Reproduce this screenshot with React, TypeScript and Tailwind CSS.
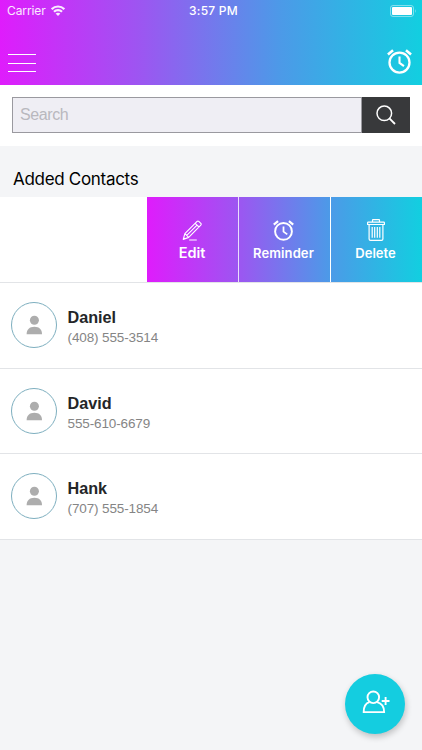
import React from "react";

type IconProps = { className?: string };

const AlarmIcon = ({ className }: IconProps) => (
  <svg viewBox="0 0 24 24" fill="none" stroke="currentColor" strokeWidth="2.2" className={className}>
    <circle cx="12" cy="13" r="9.6" />
    <path d="M12 7.3V13.3L16.3 16.4" strokeWidth="2" />
    <path d="M.9 5.2L5.8 1.2M23.1 5.2L18.2 1.2" strokeWidth="2.5" />
  </svg>
);

const PencilIcon = () => (
  <svg viewBox="0 0 22 22" fill="none" stroke="currentColor" strokeWidth="1.2" strokeLinejoin="round" className="h-[21px] w-[21px]">
    <path d="M1.3 20.3L3 14.2L15.8 1.5Q16.7.7 17.6 1.5L19.7 3.6Q20.5 4.5 19.7 5.4L7 18.2ZM13.8 3.5L17.8 7.3M3 14.2L7 18.2M5 16.2L15.8 5.4M1.8 18.5L3 19.7M7.5 20.9H15.5" />
  </svg>
);

const TrashIcon = () => (
  <svg viewBox="0 0 18 22" fill="none" stroke="currentColor" strokeWidth="1.2" strokeLinejoin="round" className="h-[22px] w-[18px]">
    <path d="M5.5 3V1.1Q5.5.6 6 .6H12Q12.5.6 12.5 1.1V3M1.3 3.1H16.7Q17.4 3.1 17.4 3.8V5.5H.6V3.8Q.6 3.1 1.3 3.1ZM2.1 5.5V20Q2.1 21.4 3.5 21.4H14.5Q15.9 21.4 15.9 20V5.5M5.2 8V18.8M7.7 8V18.8M10.3 8V18.8M12.8 8V18.8" />
  </svg>
);

const Avatar = () => (
  <div className="flex h-[46px] w-[46px] shrink-0 items-center justify-center rounded-full border border-[#7eafbf]">
    <svg viewBox="0 0 16 20" className="h-5 w-4" fill="#adadad">
      <circle cx="8.4" cy="5.2" r="4.5" />
      <path d="M.6 19.2C.6 14.5 3.6 11.8 8.4 11.8S16 14.5 16 19.2Z" />
    </svg>
  </div>
);

const contacts = [
  { name: "Daniel", phone: "(408) 555-3514" },
  { name: "David", phone: "555-610-6679" },
  { name: "Hank", phone: "(707) 555-1854" },
];

export default function App() {
  return (
    <main className="relative flex h-[750px] w-[422px] flex-col overflow-hidden bg-[#f4f5f7] font-['Inter',sans-serif]">
      <header className="flex h-[84.5px] shrink-0 flex-col bg-[linear-gradient(90deg,#df1cfc_0%,#9b57f1_34%,#4d99e8_66%,#12cfe0_100%)] text-white">
        <div className="grid h-[22px] grid-cols-3 items-center pr-[5px] pl-[7px]">
          <div className="flex items-center gap-[5px] text-white/90">
            <span className="text-[12px] leading-none tracking-[-0.1px]">Carrier</span>
            <svg viewBox="0 0 14 11" className="mb-px h-[11px] w-[14px]" fill="none" stroke="currentColor" strokeWidth="2.2">
              <path d="M.7 4.1C4.2.6 9.8.6 13.3 4.1M3 6.7C5.2 4.5 8.8 4.5 11 6.7" />
              <path d="M7 10.9L4.6 8.6Q7 6.7 9.4 8.6Z" fill="currentColor" stroke="none" />
            </svg>
          </div>
          <span className="pl-[3px] text-center text-[12px] leading-none font-medium tracking-[0.25px] whitespace-nowrap">3:57 PM</span>
          <svg viewBox="0 0 27 12" className="mb-px h-3 w-[27px] justify-self-end" fill="none">
            <rect x=".5" y=".5" width="23" height="11" rx="2.5" stroke="white" strokeOpacity=".45" />
            <rect x="2" y="2" width="20" height="8" rx="1" fill="white" />
            <path d="M25 4Q26.5 6 25 8Z" fill="white" fillOpacity=".5" />
          </svg>
        </div>
        <div className="flex items-start justify-between pr-[10px] pl-2">
          <div className="flex w-7 flex-col gap-[7.5px] pt-8">
            <div className="h-px bg-white" />
            <div className="h-px bg-white" />
            <div className="h-px bg-white" />
          </div>
          <AlarmIcon className="mt-[27px] h-[25px] w-[25px]" />
        </div>
      </header>

      <section className="flex h-[61.5px] shrink-0 items-start bg-white pt-[12.5px] pr-[12px] pl-[12px]">
        <div className="flex h-9 flex-1 items-center border border-[#9a999f] bg-[#efeef4] pl-[7px] font-['Liberation_Sans',sans-serif] text-[16px] tracking-[-0.4px] text-[#b9b8be]">
          Search
        </div>
        <div className="flex h-9 w-12 items-center justify-center bg-[#38393b] text-white">
          <svg viewBox="0 0 20 20" className="h-5 w-5" fill="none" stroke="currentColor" strokeWidth="1.5">
            <circle cx="8.3" cy="8.3" r="7.3" />
            <path d="M13.4 13.4L19 19" strokeWidth="1.8" />
          </svg>
        </div>
      </section>

      <h2 className="flex h-[51px] shrink-0 items-end pb-2 pl-[13px] text-[17px] leading-[20px] tracking-[-0.3px] text-black">
        Added Contacts
      </h2>

      <section className="flex h-[86px] shrink-0 border-b border-[#e2e4e7] bg-white text-white">
        <div className="w-[147px]" />
        <div className="flex flex-1 bg-[linear-gradient(90deg,#df1cfc_0%,#9b57f1_34%,#4d99e8_66%,#12cfe0_100%)]">
          <div className="flex w-[92px] flex-col items-center border-r border-white/80 pt-[23px]">
            <PencilIcon />
            <span className="mt-1 pr-[1px] text-[14.5px] leading-[16px] font-semibold">Edit</span>
          </div>
          <div className="flex w-[92px] flex-col items-center border-r border-white pt-[23px] pr-[2px]">
            <AlarmIcon className="h-[21px] w-[21px]" />
            <span className="mt-1 text-[13px] leading-[16px] font-semibold tracking-[0.1px]">Reminder</span>
          </div>
          <div className="flex flex-1 flex-col items-center pt-[22px] pr-[2px]">
            <TrashIcon />
            <span className="mt-1 text-[13px] leading-[16px] font-semibold">Delete</span>
          </div>
        </div>
      </section>

      <ul className="shrink-0 font-['Liberation_Sans',sans-serif]">
        {contacts.map(({ name, phone }) => (
          <li key={name} className="flex h-[85.5px] items-center gap-[10.5px] border-b border-[#e2e4e7] bg-white pl-[11px]">
            <Avatar />
            <div className="flex flex-col gap-[3px] pt-[3px]">
              <span className="text-[16.2px] leading-[20px] font-bold text-[#242628]">{name}</span>
              <span className="text-[13.5px] leading-[16px] tracking-[-0.12px] text-[#858585]">{phone}</span>
            </div>
          </li>
        ))}
      </ul>

      <button className="absolute top-[673.5px] left-[344.5px] flex h-[60px] w-[60px] items-center justify-center rounded-full bg-[#14cde0] pb-1 text-white shadow-[1px_3px_6px_rgba(0,0,0,0.22)]">
        <svg viewBox="0 0 28 24" className="h-6 w-7 overflow-visible" fill="none" stroke="currentColor" strokeWidth="1.9">
          <circle cx="12.3" cy="7.3" r="5.8" />
          <path d="M8.5 12.2C4.5 13.3 2.7 16.8 2.7 22.1H23.1C23.1 16.8 20.5 13.3 16.1 12.2M20.7 11H28.5M24.6 7.1V14.9" />
        </svg>
      </button>
    </main>
  );
}
